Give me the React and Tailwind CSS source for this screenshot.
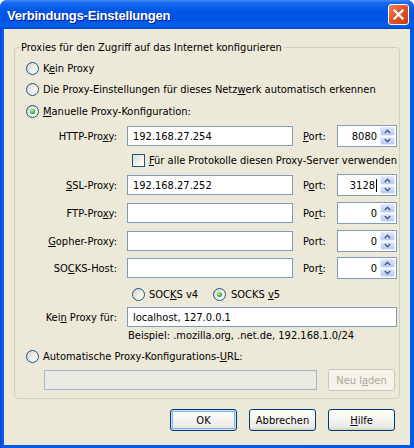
import React from "react";

const ui = "font-['DejaVu_Sans_Condensed','Liberation_Sans',sans-serif] text-[11px] leading-[13px] text-black";

function Radio({ checked }) {
  return (
    <span className="flex h-[13px] w-[13px] shrink-0 items-center justify-center rounded-full border border-[#1C5180] bg-[linear-gradient(135deg,#D4D1C6_0%,#F1F0EA_55%,#FFFFFF_100%)]">
      {checked && (
        <span className="h-[5px] w-[5px] rounded-full bg-[radial-gradient(circle_at_40%_35%,#B4F5A8_0%,#37B637_55%,#1C891C_100%)]" />
      )}
    </span>
  );
}

function Checkbox() {
  return (
    <span className="h-[13px] w-[13px] shrink-0 border border-[#1C5180] bg-[linear-gradient(135deg,#DCD9CF_0%,#F4F3EE_60%,#FFFFFF_100%)]" />
  );
}

function RadioRow({ checked, children, className = "" }) {
  return (
    <div className={"flex h-[16px] items-center gap-[4px] " + className}>
      <Radio checked={checked} />
      <span>{children}</span>
    </div>
  );
}

function Field({ value, width }) {
  return (
    <div
      className="flex h-[20px] items-center border border-[#7F9DB9] bg-white pl-[5px]"
      style={{ width }}
    >
      {value}
    </div>
  );
}

function Chevron({ up }) {
  return (
    <svg width="7" height="5" viewBox="0 0 7 5">
      <path
        d={up ? "M0.8 4 L3.5 1.3 L6.2 4" : "M0.8 1 L3.5 3.7 L6.2 1"}
        fill="none"
        stroke="#4D6185"
        strokeWidth="1.6"
      />
    </svg>
  );
}

function Spinner({ value, caret }) {
  return (
    <div className="flex h-[22px] w-[60px] items-stretch border border-[#7F9DB9] bg-white">
      <div className="flex flex-1 items-center justify-end pr-[3px]">
        {value}
        {caret && <span className="ml-[1px] h-[13px] w-[1px] bg-black" />}
      </div>
      <div className="flex w-[16px] flex-col gap-[1px] py-[1px] pr-[1px]">
        <div className="flex flex-1 items-center justify-center rounded-[2px] border border-[#E2EAFE] bg-[linear-gradient(180deg,#D8E3FC,#B7CAF5)]">
          <Chevron up />
        </div>
        <div className="flex flex-1 items-center justify-center rounded-[2px] border border-[#E2EAFE] bg-[linear-gradient(180deg,#D8E3FC,#B7CAF5)]">
          <Chevron />
        </div>
      </div>
    </div>
  );
}

function ProxyRow({ label, value, port, portLabel, caret, className = "" }) {
  return (
    <div className={"flex h-[24px] items-center " + className}>
      <div className="w-[102px] text-right">{label}</div>
      <div className="ml-[10px]">
        <Field value={value} width={166} />
      </div>
      <div className="ml-[10px] w-[34px]">{portLabel}</div>
      <Spinner value={port} caret={caret} />
    </div>
  );
}

function Button({ children, isDefault, disabled }) {
  const base =
    "flex h-[22px] w-[67px] items-center justify-center rounded-[3px] border ";
  if (disabled) {
    return (
      <div className={base + "border-[#C9C7BA] bg-[#F5F4EA] text-[#ACA899]"}>
        {children}
      </div>
    );
  }
  return (
    <div
      className={
        base +
        "border-[#003C74] bg-[linear-gradient(180deg,#FFFFFF_0%,#F4F4F0_50%,#ECEBE6_85%,#D6D0C5_100%)] " +
        (isDefault ? "shadow-[inset_0_0_0_1px_#CEE0FB,inset_0_0_0_2px_#8CB1EC]" : "")
      }
    >
      {children}
    </div>
  );
}

export default function App() {
  return (
    <div className="h-[448px] w-[414px] bg-white">
      <div className="flex h-[448px] w-[414px] flex-col overflow-hidden rounded-t-[7px] bg-[linear-gradient(90deg,#0831D9_0px,#0A55E0_1px,#0A5AE8_3px,#0058E6_100%)]">
        {/* title bar */}
        <div className="flex h-[29px] shrink-0 items-center justify-between bg-[linear-gradient(180deg,#3E8FF6_0%,#1769EE_10%,#0157E5_35%,#0054E3_70%,#0160F0_88%,#0046D2_100%)] pl-[7px] pr-[5px]">
          <span className="mt-[3px] font-['Liberation_Sans',sans-serif] text-[13px] font-bold tracking-[-0.2px] text-white [text-shadow:1px_1px_0_#0A1E8C]">
            Verbindungs-Einstellungen
          </span>
          <div className="flex h-[21px] w-[21px] items-center justify-center rounded-[3px] border border-white bg-[linear-gradient(135deg,#EE8461_0%,#E1572B_45%,#C8390F_100%)]">
            <svg width="11" height="11" viewBox="0 0 11 11">
              <path d="M1.5 1.5 L9.5 9.5 M9.5 1.5 L1.5 9.5" stroke="#FFFFFF" strokeWidth="2.2" strokeLinecap="square" />
            </svg>
          </div>
        </div>

        {/* client area */}
        <div className={"mx-[4px] mb-[3px] flex flex-1 flex-col bg-[#ECE9D8] " + ui}>
          <div className="ml-[10px] mt-[18px] w-[386px] rounded-[4px] border border-[#D0D0BF] pb-[7px]">
            <div className="-mt-[7px] ml-[4px] h-[13px] w-fit bg-[#ECE9D8] px-[2px]">
              Proxies für den Zugriff auf das Internet konfigurieren
            </div>

            <RadioRow className="mt-[6px] pl-[11px]">
              K<u>e</u>in Proxy
            </RadioRow>
            <RadioRow className="mt-[5px] pl-[11px]">
              Die Proxy-Einstellungen für dieses Netz<u>w</u>erk automatisch erkennen
            </RadioRow>
            <RadioRow checked className="mt-[6px] pl-[11px]">
              <u>M</u>anuelle Proxy-Konfiguration:
            </RadioRow>

            <ProxyRow
              className="mt-[5px]"
              label={<>HTTP-Pro<u>x</u>y:</>}
              value="192.168.27.254"
              portLabel={<><u>P</u>ort:</>}
              port="8080"
            />

            <div className="mt-[4px] flex h-[16px] items-center gap-[4px] pl-[117px]">
              <Checkbox />
              <span>
                <u>F</u>ür alle Protokolle diesen Proxy-Server verwenden
              </span>
            </div>

            <ProxyRow
              className="mt-[5px]"
              label={<><u>S</u>SL-Proxy:</>}
              value="192.168.27.252"
              portLabel={<>P<u>o</u>rt:</>}
              port="3128"
              caret
            />
            <ProxyRow
              className="mt-[4px]"
              label={<>FTP-Pro<u>x</u>y:</>}
              value=""
              portLabel={<>Po<u>r</u>t:</>}
              port="0"
            />
            <ProxyRow
              className="mt-[4px]"
              label={<><u>G</u>opher-Proxy:</>}
              value=""
              portLabel="Port:"
              port="0"
            />
            <ProxyRow
              className="mt-[3px]"
              label={<>SO<u>C</u>KS-Host:</>}
              value=""
              portLabel={<>Por<u>t</u>:</>}
              port="0"
            />

            <div className="mt-[6px] flex h-[16px] items-center pl-[117px]">
              <div className="flex w-[81px] items-center gap-[4px]">
                <Radio />
                <span>
                  SOC<u>K</u>S v4
                </span>
              </div>
              <div className="flex items-center gap-[5px]">
                <Radio checked />
                <span>
                  SOCKS <u>v</u>5
                </span>
              </div>
            </div>

            <div className="mt-[4px] flex h-[22px] items-center">
              <div className="w-[102px] text-right">
                Kei<u>n</u> Proxy für:
              </div>
              <div className="ml-[10px]">
                <Field value="localhost, 127.0.0.1" width={270} />
              </div>
            </div>
            <div className="flex h-[14px] items-center pl-[113px]">
              Beispiel: .mozilla.org, .net.de, 192.168.1.0/24
            </div>

            <RadioRow className="mt-[6px] pl-[11px]">
              Automatische Proxy-Konfigurations-<u>U</u>RL:
            </RadioRow>

            <div className="mt-[5px] flex h-[22px] items-center pl-[29px]">
              <div className="h-[20px] w-[273px] border border-[#A5B6CD] bg-[#EBEAE3]" />
              <div className="ml-[11px]">
                <Button disabled>
                  Neu l<u>a</u>den
                </Button>
              </div>
            </div>
          </div>

          <div className="mt-[10px] flex justify-end gap-[12px] pr-[15px]">
            <Button isDefault>OK</Button>
            <Button>Abbrechen</Button>
            <Button>
              <u>H</u>ilfe
            </Button>
          </div>
        </div>
      </div>
    </div>
  );
}
